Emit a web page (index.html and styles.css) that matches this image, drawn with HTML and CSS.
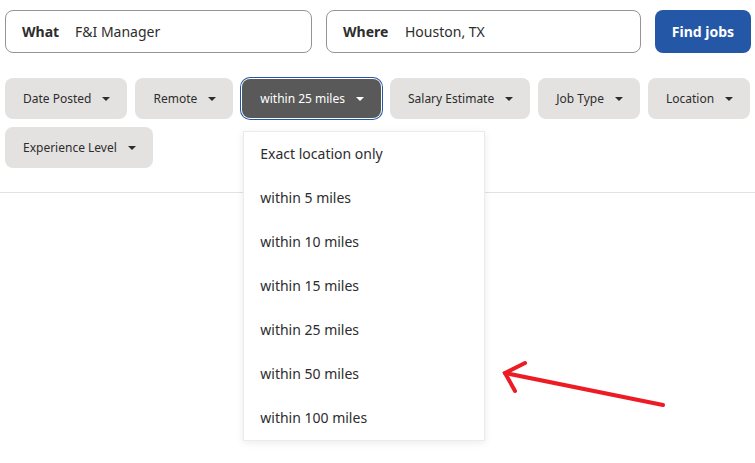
FILE: index.html
```html
<!DOCTYPE html>
<html lang="en">
<head>
    <meta charset="UTF-8">
    <meta name="viewport" content="width=device-width, initial-scale=1.0">
    <title>Jobs search</title>
    <link rel="stylesheet" href="styles.css">
</head>
<body>
    <form class="search">
        <label class="field field-what">
            <span class="field-label">What</span>
            <span class="field-value">F&amp;I Manager</span>
        </label>
        <label class="field field-where">
            <span class="field-label">Where</span>
            <span class="field-value">Houston, TX</span>
        </label>
        <button type="button" class="find-btn">Find jobs</button>
    </form>

    <div class="filters">
        <button class="pill">Date Posted <span class="caret"></span></button>
        <button class="pill">Remote <span class="caret"></span></button>
        <div class="pill-wrap">
            <button class="pill active">within 25 miles <span class="caret"></span></button>
            <ul class="menu">
                <li>Exact location only</li>
                <li>within 5 miles</li>
                <li>within 10 miles</li>
                <li>within 15 miles</li>
                <li>within 25 miles</li>
                <li>within 50 miles</li>
                <li>within 100 miles</li>
            </ul>
        </div>
        <button class="pill">Salary Estimate <span class="caret"></span></button>
        <button class="pill">Job Type <span class="caret"></span></button>
        <button class="pill">Location <span class="caret"></span></button>
        <button class="pill">Experience Level <span class="caret"></span></button>
    </div>

    <hr class="divider">

    <!-- hand drawn annotation -->
    <svg class="annotation" width="755" height="463" viewBox="0 0 755 463">
        <g stroke="#ed1c24" stroke-width="4" stroke-linecap="round" fill="none">
            <path d="M663 405 L505 373"/>
            <path d="M525 363 L505 373 L515 391"/>
        </g>
    </svg>
</body>
</html>
```

FILE: styles.css
```css
body {
    margin: 0;
    font-family: "Noto Sans", "Open Sans", sans-serif;
    color: #2d2d2d;
    background: #fff;
    position: relative;
    height: 463px;
    overflow: hidden;
}
.search {
    display: flex;
    gap: 14px;
    padding: 10px 4px 0 5px;
    height: 43px;
}
.field {
    display: flex;
    align-items: center;
    border: 1px solid #949494;
    border-radius: 8px;
    padding: 0 16px;
    font-size: 14px;
    box-sizing: border-box;
}
.field-what {
    width: 307px;
}
.field-where {
    width: 315px;
}
.field-label {
    font-weight: bold;
    color: #2d2d2d;
}
.field-what .field-label {
    width: 53px;
}
.field-where .field-label {
    width: 62px;
}
.field-value {
    color: #2d2d2d;
}
.find-btn {
    width: 96px;
    border: none;
    border-radius: 8px;
    background: #2557a7;
    color: #fff;
    font-family: inherit;
    font-size: 14px;
    font-weight: bold;
}
.filters {
    display: flex;
    flex-wrap: wrap;
    gap: 8px 8px;
    padding: 25px 0 0 5px;
}
.pill-wrap {
    position: relative;
}
.pill {
    display: flex;
    align-items: center;
    gap: 11px;
    height: 41px;
    padding: 0 17px 0 18px;
    border: none;
    border-radius: 8px;
    background: #e4e2e0;
    color: #2d2d2d;
    font-family: inherit;
    font-size: 12px;
    box-sizing: border-box;
}
.pill.active {
    background: #595959;
    color: #fff;
    box-shadow: 0 0 0 1px #fff, 0 0 0 2px #2557a7;
    margin: 1px 1px 0;
    height: 39px;
}
.caret {
    width: 0;
    height: 0;
    border-left: 4px solid transparent;
    border-right: 4px solid transparent;
    border-top: 4px solid currentColor;
}
.menu {
    position: absolute;
    left: 2px;
    top: 53px;
    width: 240px;
    margin: 0;
    padding: 0;
    list-style: none;
    background: #fff;
    border: 1px solid #ebebeb;
    box-shadow: 0 2px 8px rgba(0, 0, 0, 0.08);
    z-index: 2;
}
.menu li {
    height: 44px;
    line-height: 44px;
    padding-left: 16px;
    font-size: 14px;
    color: #2d2d2d;
}
.divider {
    margin: 24px 0 0;
    border: none;
    border-top: 1px solid #e4e2e0;
}
.annotation {
    position: absolute;
    left: 0;
    top: 0;
    z-index: 3;
}
```
